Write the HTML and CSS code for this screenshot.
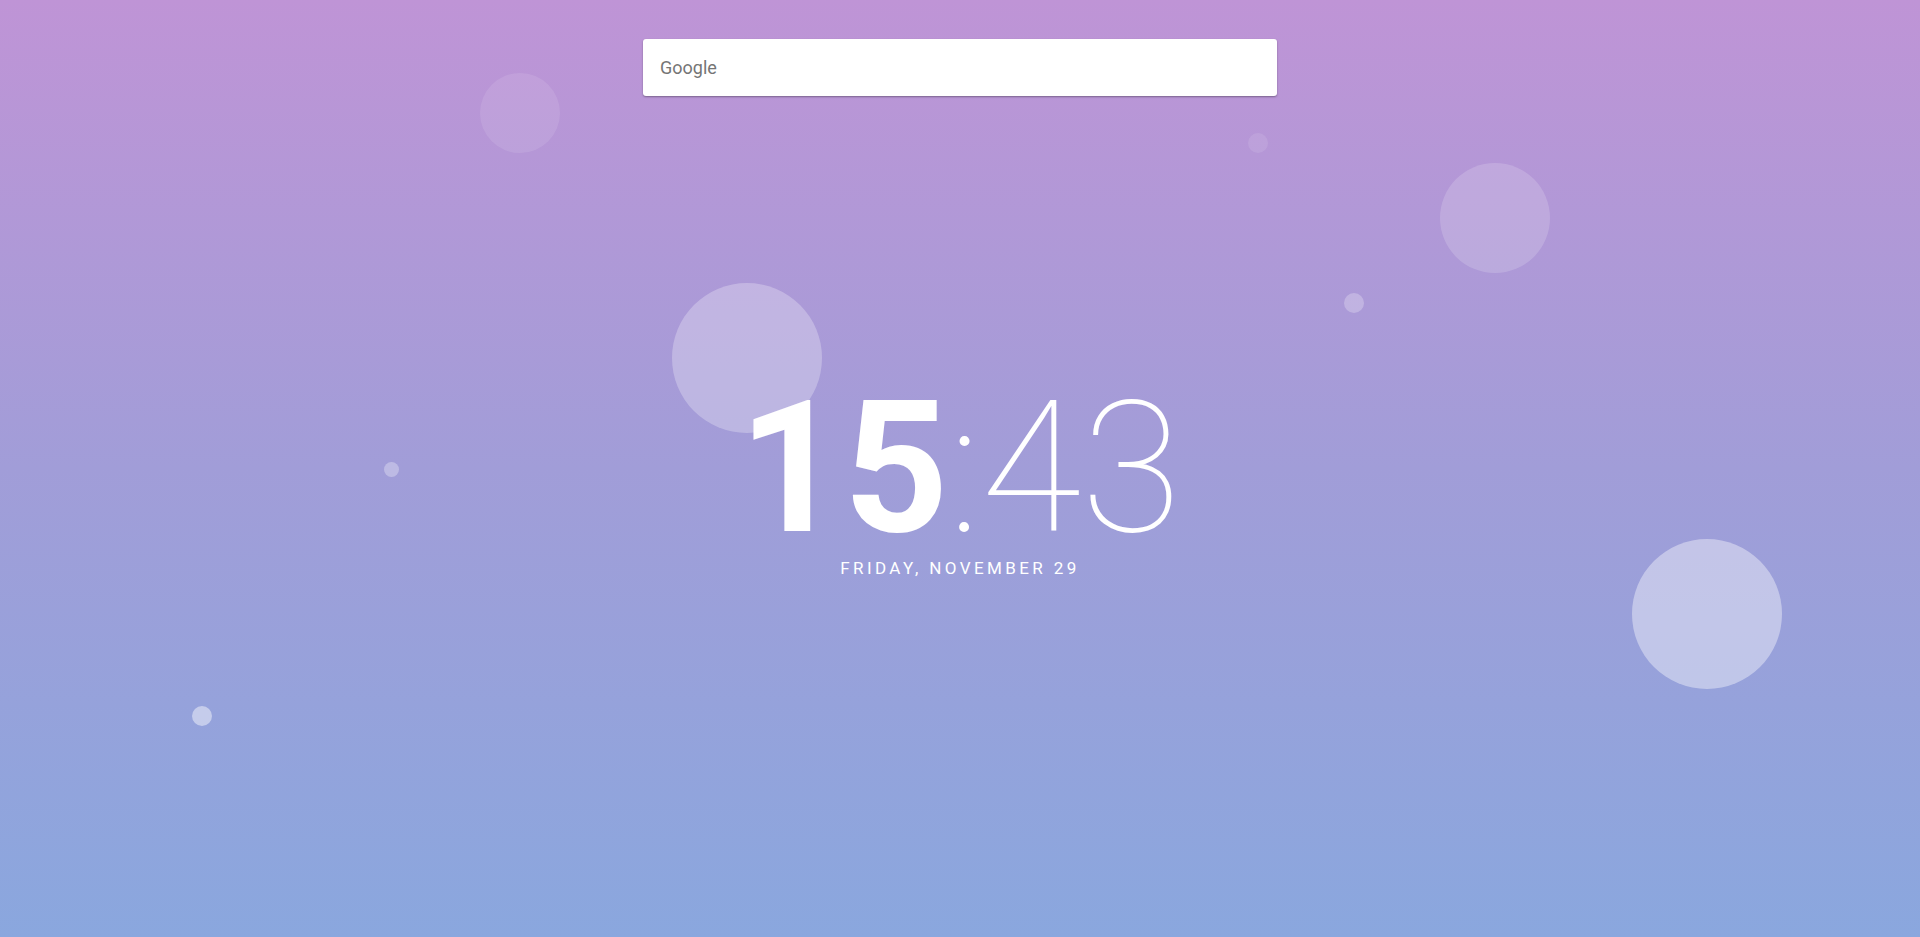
FILE: index.html
```html
<!DOCTYPE html>
<html lang="en">
<head>
<meta charset="utf-8">
<title>New Tab</title>
<link rel="stylesheet" href="styles.css">
</head>
<body>
<div class="page">
  <div class="bubbles">
    <span class="bubble b1"></span>
    <span class="bubble b2"></span>
    <span class="bubble b3"></span>
    <span class="bubble b4"></span>
    <span class="bubble b5"></span>
    <span class="bubble b6"></span>
    <span class="bubble b7"></span>
    <span class="bubble b8"></span>
  </div>
  <form class="search">
    <input class="search-input" type="text" placeholder="Google">
  </form>
  <div class="clock">
    <div class="time"><span class="hours">15</span><span class="minutes">:43</span></div>
    <div class="date">FRIDAY, NOVEMBER 29</div>
  </div>
</div>
</body>
</html>
```
FILE: styles.css
```css
html, body {
  margin: 0;
  padding: 0;
  height: 100%;
}
body {
  font-family: Roboto, "Liberation Sans", sans-serif;
  background: linear-gradient(to bottom, #bf94d6 0%, #a19dd8 50%, #8aa7de 100%);
  overflow: hidden;
}
.page {
  position: relative;
  height: 937px;
  display: flex;
  flex-direction: column;
  align-items: center;
}
.bubbles {
  position: absolute;
  inset: 0;
  pointer-events: none;
}
.bubble {
  position: absolute;
  border-radius: 50%;
  background: #fff;
}
.b1 { left: 480px; top: 73px; width: 80px; height: 80px; opacity: 0.1; }
.b2 { left: 1440px; top: 163px; width: 110px; height: 110px; opacity: 0.17; }
.b3 { left: 672px; top: 283px; width: 150px; height: 150px; opacity: 0.27; }
.b4 { left: 1632px; top: 539px; width: 150px; height: 150px; opacity: 0.4; }
.b5 { left: 1248px; top: 133px; width: 20px; height: 20px; opacity: 0.1; }
.b6 { left: 1344px; top: 293px; width: 20px; height: 20px; opacity: 0.25; }
.b7 { left: 384px; top: 462px; width: 15px; height: 15px; opacity: 0.3; }
.b8 { left: 192px; top: 706px; width: 20px; height: 20px; opacity: 0.45; }

.search {
  position: relative;
  margin: 39px 0 0;
  width: 634px;
}
.search-input {
  display: block;
  box-sizing: border-box;
  width: 100%;
  height: 57px;
  border: none;
  border-radius: 3px;
  background: #fff;
  padding: 0 17px;
  font-family: Roboto, "Liberation Sans", sans-serif;
  font-size: 18px;
  color: #333;
  box-shadow: 0 1px 2px rgba(0, 0, 0, 0.35);
  outline: none;
}
.search-input::placeholder {
  color: #757575;
}
.clock {
  position: relative;
  margin-top: 295px;
  display: flex;
  flex-direction: column;
  align-items: center;
  color: #fff;
}
.time {
  font-size: 183px;
  line-height: 0.85;
  white-space: nowrap;
}
.hours {
  font-weight: 700;
}
.minutes {
  font-weight: 100;
}
.date {
  margin-top: 11px;
  font-size: 17px;
  letter-spacing: 3.4px;
  font-weight: 400;
}
```
